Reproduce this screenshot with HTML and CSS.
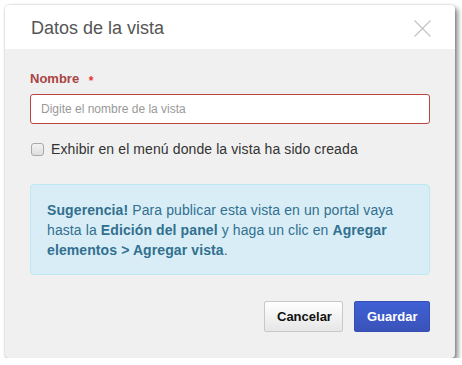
FILE: index.html
```html
<!DOCTYPE html>
<html lang="es">
<head>
<meta charset="utf-8">
<title>Datos de la vista</title>
<link rel="stylesheet" href="styles.css">
</head>
<body>
<div class="dialog">
  <div class="dialog-header">
    <h1 class="dialog-title">Datos de la vista</h1>
    <svg class="close" width="17" height="17" viewBox="0 0 17 17" aria-label="Cerrar">
      <path d="M0.5 0.5 L16.5 16.5 M16.5 0.5 L0.5 16.5" stroke="#c2c2c2" stroke-width="1.1" fill="none"/>
    </svg>
  </div>
  <div class="dialog-body">
    <label class="field-label">Nombre <span class="req">*</span></label>
    <input class="field-input" type="text" placeholder="Digite el nombre de la vista">
    <label class="check-row">
      <input class="check" type="checkbox">
      <span>Exhibir en el menú donde la vista ha sido creada</span>
    </label>
    <div class="alert">
      <b>Sugerencia!</b> Para publicar esta vista en un portal vaya hasta la <b>Edición del panel</b> y haga un clic en <b>Agregar elementos &gt; Agregar vista</b>.
    </div>
    <div class="actions">
      <button class="btn btn-default" type="button">Cancelar</button>
      <button class="btn btn-primary" type="button">Guardar</button>
    </div>
  </div>
</div>
</body>
</html>
```
FILE: styles.css
```css
html, body {
  margin: 0;
  padding: 0;
  background: #ffffff;
}
body {
  font-family: "Liberation Sans", Arial, sans-serif;
  padding: 5px 0 0 5px;
}
.dialog {
  width: 450px;
  height: 353px;
  box-sizing: border-box;
  background: #f0f0f0;
  border-radius: 4px;
  box-shadow: 3px 3px 5px rgba(0, 0, 0, 0.45), 0 0 2px rgba(0, 0, 0, 0.25);
  overflow: hidden;
  display: flex;
  flex-direction: column;
}
.dialog-header {
  height: 44px;
  box-sizing: border-box;
  background: #ffffff;
  padding: 12px 24px 0 26px;
  display: flex;
  justify-content: space-between;
  align-items: flex-start;
}
.dialog-title {
  margin: 0;
  font-size: 18px;
  font-weight: normal;
  line-height: 22px;
  color: #555555;
}
.close {
  margin-top: 3px;
  display: block;
}
.dialog-body {
  padding: 21px 25px 0 25px;
  display: flex;
  flex-direction: column;
}
.field-label {
  display: block;
  height: 18px;
  font-size: 13px;
  font-weight: bold;
  line-height: 18px;
  color: #a94442;
}
.req {
  color: #e8322f;
  margin-left: 6px;
  vertical-align: -2px;
  line-height: 0;
  font-size: 12px;
}
.field-input {
  margin: 6px 0 0 0;
  width: 400px;
  height: 30px;
  box-sizing: border-box;
  border: 1px solid #b9433f;
  border-radius: 3px;
  padding: 0 10px;
  font-family: "Liberation Sans", Arial, sans-serif;
  font-size: 12px;
  background: #ffffff;
  outline: none;
}
.field-input::placeholder {
  color: #999999;
}
.check-row {
  margin-top: 15px;
  display: flex;
  align-items: center;
  font-size: 14px;
  line-height: 20px;
  letter-spacing: 0.1px;
  color: #333333;
}
.check {
  appearance: none;
  -webkit-appearance: none;
  width: 13px;
  height: 13px;
  box-sizing: border-box;
  margin: 0 7px 0 1px;
  border: 1px solid #a9a9a9;
  border-radius: 3px;
  background: linear-gradient(#f2f2f2, #dedede);
}
.alert {
  margin-top: 25px;
  width: 400px;
  height: 91px;
  box-sizing: border-box;
  padding: 15px 16px;
  background: #d9edf7;
  border: 1px solid #bce8f1;
  border-radius: 4px;
  color: #31708f;
  font-size: 14px;
  line-height: 20px;
  letter-spacing: 0.1px;
}
.actions {
  margin-top: 26px;
  display: flex;
  justify-content: flex-end;
  gap: 11px;
}
.btn {
  height: 31px;
  box-sizing: border-box;
  padding: 0 12px;
  font-family: "Liberation Sans", Arial, sans-serif;
  font-size: 13px;
  font-weight: bold;
  border-radius: 2px;
  cursor: pointer;
}
.btn-default {
  width: 79px;
  color: #111111;
  border: 1px solid #c8c8c8;
  background: linear-gradient(#ffffff, #e6e6e6);
}
.btn-primary {
  width: 76px;
  color: #ffffff;
  border: 1px solid #3550b3;
  background: linear-gradient(#3f60d4, #3a53ba);
}
```
